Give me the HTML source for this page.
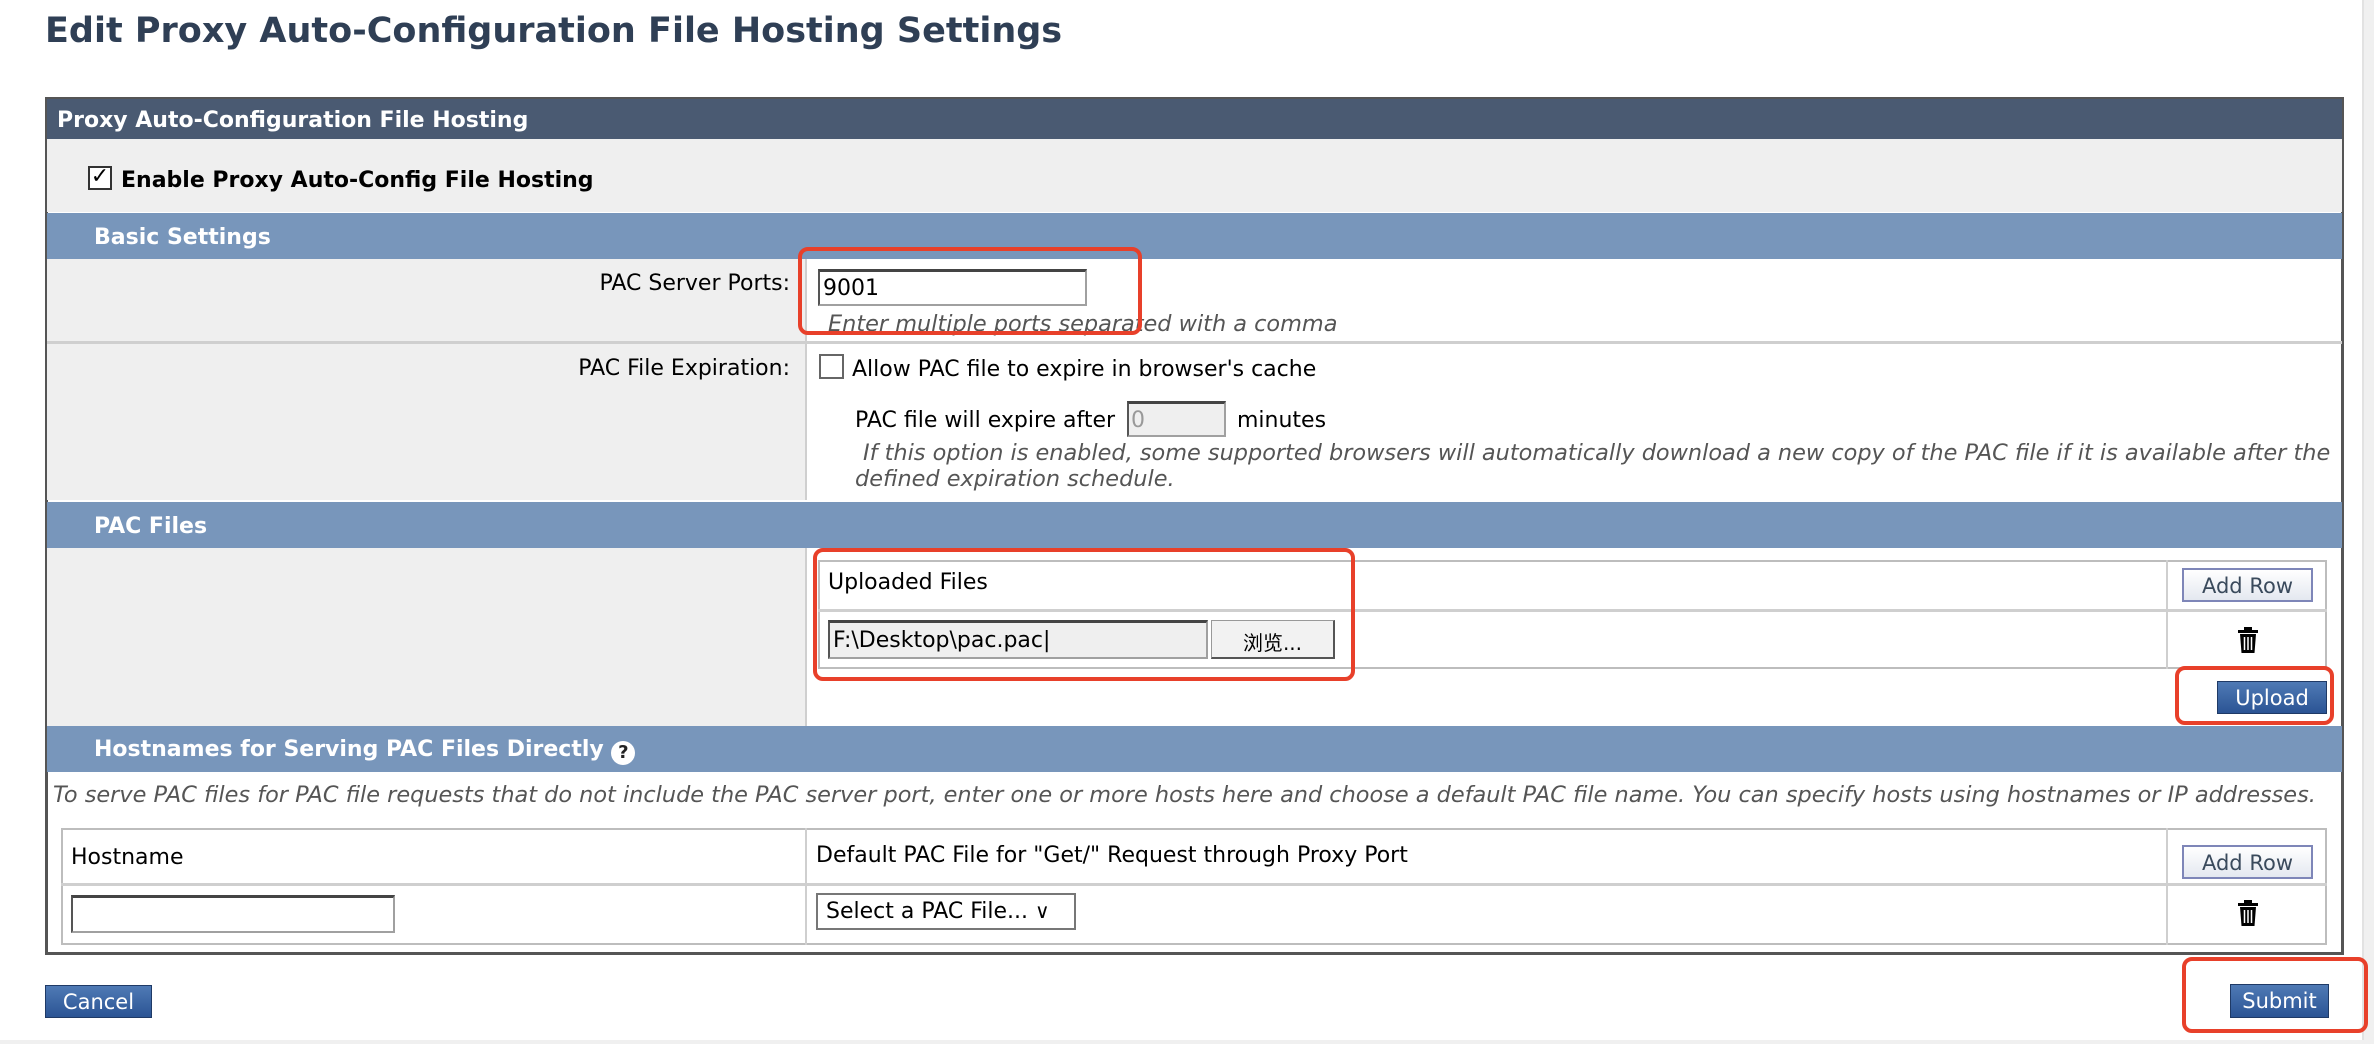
<!DOCTYPE html>
<html><head><meta charset="utf-8"><style>
*{margin:0;padding:0;box-sizing:border-box}
body{width:2374px;height:1044px;background:#fff;font-family:"DejaVu Sans","Noto Sans CJK SC",sans-serif;font-size:22px;color:#000;position:relative;overflow:hidden}
.a{position:absolute;white-space:nowrap}
.bar{position:absolute;left:47px;width:2295px;background:#7896bb;color:#fff;font-weight:bold;font-size:22px}
.grey{background:#efefef}
.hl{position:absolute;height:3px;background:#cfcfcf}
.vl{position:absolute;width:2px;background:#cfcfcf}
.red{position:absolute;border:4px solid #e8402a;border-radius:10px}
.btn{position:absolute;border:1px solid #1f3a66;background:linear-gradient(#4f7ab5,#2b5494);color:#fff;font-size:21px;text-align:center}
.add{position:absolute;border:2px solid #7e86b8;background:linear-gradient(#fff,#e4e8f0);color:#3a4a5c;font-size:21px;text-align:center}
.inp{position:absolute;background:#fff;border:2px solid #a0a0a0;border-top:3px solid #444;border-left:2px solid #555}
.it{font-style:italic;color:#555;font-size:22.4px}
</style></head><body>
<div class="a" style="left:45px;top:11px;font-size:35px;font-weight:bold;color:#2f3f55">Edit Proxy Auto-Configuration File Hosting Settings</div>

<div class="a" style="left:45px;top:97px;width:2299px;height:858px;border:3px solid #555"></div>
<div class="a" style="left:47px;top:99px;width:2295px;height:40px;background:#4a5a72;color:#fff;font-weight:bold;padding:9px 10px;font-size:22px">Proxy Auto-Configuration File Hosting</div>

<div class="a grey" style="left:47px;top:139px;width:2295px;height:73px"></div>
<div class="a" style="left:88px;top:166px;width:24px;height:24px;border:2px solid #333;background:#fff;font-size:22px;line-height:18px;text-align:center">✓</div>
<div class="a" style="left:121px;top:168px;font-weight:bold">Enable Proxy Auto-Config File Hosting</div>

<div class="bar" style="top:213px;height:46px;padding:12px 47px">Basic Settings</div>

<div class="a grey" style="left:47px;top:259px;width:758px;height:241px"></div>
<div class="vl" style="left:805px;top:259px;height:241px"></div>
<div class="hl" style="left:47px;top:341px;width:2295px"></div>
<div class="a" style="left:47px;top:271px;width:743px;text-align:right">PAC Server Ports:</div>
<div class="inp" style="left:818px;top:269px;width:269px;height:37px;padding:4px 3px">9001</div>
<div class="a it" style="left:828px;top:311px">Enter multiple ports separated with a comma</div>

<div class="a" style="left:47px;top:356px;width:743px;text-align:right">PAC File Expiration:</div>
<div class="a" style="left:819px;top:354px;width:25px;height:25px;border:2px solid #666;background:#fff"></div>
<div class="a" style="left:852px;top:357px">Allow PAC file to expire in browser's cache</div>
<div class="a" style="left:855px;top:408px">PAC file will expire after</div>
<div class="inp" style="left:1127px;top:401px;width:99px;height:36px;background:#efefef;color:#999;padding:4px 2px">0</div>
<div class="a" style="left:1237px;top:408px">minutes</div>
<div class="a it" style="left:863px;top:440px">If this option is enabled, some supported browsers will automatically download a new copy of the PAC file if it is available after the</div>
<div class="a it" style="left:855px;top:466px">defined expiration schedule.</div>

<div class="bar" style="top:502px;height:46px;padding:12px 47px">PAC Files</div>
<div class="a grey" style="left:47px;top:548px;width:758px;height:178px"></div>
<div class="vl" style="left:805px;top:548px;height:178px"></div>
<div class="a" style="left:818px;top:560px;width:1509px;height:109px;border:2px solid #bdbdbd"></div>
<div class="hl" style="left:818px;top:609px;width:1509px"></div>
<div class="vl" style="left:2166px;top:560px;height:109px"></div>
<div class="a" style="left:828px;top:570px">Uploaded Files</div>
<div class="add" style="left:2182px;top:568px;width:131px;height:34px;padding-top:4px">Add Row</div>
<div class="inp" style="left:828px;top:620px;width:380px;height:39px;background:#efefef;padding:5px 3px">F:\Desktop\pac.pac|</div>
<div class="a" style="left:1211px;top:620px;width:124px;height:39px;border:1px solid #999;border-bottom:2px solid #555;border-right:2px solid #555;background:#f2f2f2;text-align:center;padding-top:6px;font-size:20px">浏览...</div>
<svg class="a" style="left:2236px;top:626px" width="24" height="28" viewBox="0 0 24 28"><rect x="2" y="4" width="20" height="3" fill="#000"/><rect x="8" y="1" width="8" height="3" fill="#000"/><path d="M4 8h16l-1.5 19h-13z" fill="#000"/><path d="M8.5 11v13M12 11v13M15.5 11v13" stroke="#fff" stroke-width="1.5"/></svg>
<div class="btn" style="left:2217px;top:681px;width:110px;height:33px;padding-top:4px">Upload</div>

<div class="bar" style="top:726px;height:46px;padding:11px 47px">Hostnames for Serving PAC Files Directly <span style="display:inline-block;width:24px;height:24px;border-radius:12px;background:#fff;color:#222;font-size:18px;text-align:center;line-height:24px;vertical-align:-2px">?</span></div>
<div class="a it" style="left:53px;top:782px">To serve PAC files for PAC file requests that do not include the PAC server port, enter one or more hosts here and choose a default PAC file name. You can specify hosts using hostnames or IP addresses.</div>
<div class="a" style="left:61px;top:828px;width:2266px;height:117px;border:2px solid #bdbdbd"></div>
<div class="hl" style="left:61px;top:883px;width:2266px"></div>
<div class="vl" style="left:805px;top:828px;height:117px"></div>
<div class="vl" style="left:2166px;top:828px;height:117px"></div>
<div class="a" style="left:71px;top:845px">Hostname</div>
<div class="a" style="left:816px;top:843px">Default PAC File for "Get/" Request through Proxy Port</div>
<div class="add" style="left:2182px;top:845px;width:131px;height:34px;padding-top:4px">Add Row</div>
<div class="inp" style="left:71px;top:895px;width:324px;height:38px"></div>
<div class="a" style="left:816px;top:893px;width:260px;height:37px;border:2px solid #777;background:#fff;padding:4px 8px">Select a PAC File... <span style="font-size:20px">&#8744;</span></div>
<svg class="a" style="left:2236px;top:899px" width="24" height="28" viewBox="0 0 24 28"><rect x="2" y="4" width="20" height="3" fill="#000"/><rect x="8" y="1" width="8" height="3" fill="#000"/><path d="M4 8h16l-1.5 19h-13z" fill="#000"/><path d="M8.5 11v13M12 11v13M15.5 11v13" stroke="#fff" stroke-width="1.5"/></svg>

<div class="btn" style="left:45px;top:985px;width:107px;height:33px;padding-top:4px">Cancel</div>
<div class="btn" style="left:2230px;top:984px;width:99px;height:34px;padding-top:4px">Submit</div>

<div class="a" style="left:2362px;top:0;width:12px;height:1044px;background:#f0f0f0;border-left:2px solid #e2e2e2"></div>
<div class="a" style="left:0;top:1040px;width:2374px;height:4px;background:#f0f0f0"></div>

<div class="red" style="left:798px;top:247px;width:344px;height:88px"></div>
<div class="red" style="left:813px;top:548px;width:542px;height:133px"></div>
<div class="red" style="left:2175px;top:666px;width:159px;height:59px"></div>
<div class="red" style="left:2182px;top:957px;width:186px;height:76px"></div>
</body></html>
